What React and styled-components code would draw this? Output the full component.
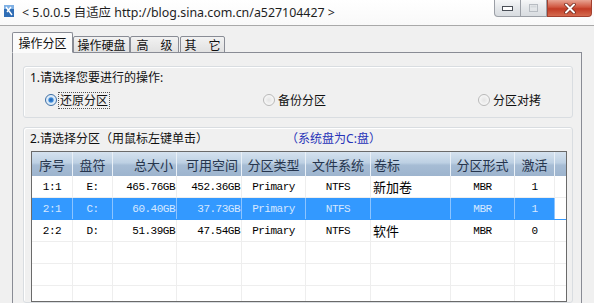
import React from 'react'
import styled, { createGlobalStyle } from 'styled-components'

const UI_FONT = `"Noto Sans", "Noto Sans CJK SC", sans-serif`
const CELL_FONT = `"Liberation Mono", "Noto Sans CJK SC", monospace`

const GlobalStyle = createGlobalStyle`
  html, body {
    margin: 0;
    padding: 0;
    background: #f0f0f0;
    overflow: hidden;
  }
`

const columns = [
  { key: 'id', title: '序号', width: 41, align: 'center', headAlign: 'center' },
  { key: 'drive', title: '盘符', width: 40, align: 'center', headAlign: 'center' },
  { key: 'total', title: '总大小', width: 64, align: 'right', headAlign: 'right' },
  { key: 'free', title: '可用空间', width: 65, align: 'right', headAlign: 'right' },
  { key: 'type', title: '分区类型', width: 64, align: 'center', headAlign: 'center' },
  { key: 'fs', title: '文件系统', width: 65, align: 'center', headAlign: 'center' },
  { key: 'label', title: '卷标', width: 80, align: 'left', headAlign: 'left', cjk: true },
  { key: 'scheme', title: '分区形式', width: 64, align: 'center', headAlign: 'center' },
  { key: 'active', title: '激活', width: 40, align: 'center', headAlign: 'center' }
]

const partitions = [
  { id: '1:1', drive: 'E:', total: '465.76GB', free: '452.36GB', type: 'Primary', fs: 'NTFS', label: '新加卷', scheme: 'MBR', active: '1' },
  { id: '2:1', drive: 'C:', total: '60.40GB', free: '37.73GB', type: 'Primary', fs: 'NTFS', label: '', scheme: 'MBR', active: '1', selected: true },
  { id: '2:2', drive: 'D:', total: '51.39GB', free: '47.54GB', type: 'Primary', fs: 'NTFS', label: '软件', scheme: 'MBR', active: '0' },
  {},
  {},
  {}
]

const gridTemplate = columns.map((c) => `${c.width}px`).join(' ') + ' 1fr'

const Window = styled.div`
  width: 594px;
  height: 303px;
  display: flex;
  flex-direction: column;
  background: #f0f0f0;
  font-family: ${UI_FONT};
  overflow: hidden;
`

const TitleBar = styled.div`
  height: 25px;
  flex-shrink: 0;
  display: flex;
  align-items: flex-start;
  background: linear-gradient(#ffffff, #f9f9f9);
  border-bottom: 1px solid #a9a9a9;
`

const AppIcon = styled.svg`
  margin: 5px 0 0 4px;
  flex-shrink: 0;
`

const Caption = styled.div`
  margin-left: 8px;
  line-height: 25px;
  font-size: 12.4px;
  color: #1e1e1e;
  white-space: nowrap;
`

const Controls = styled.div`
  margin-left: auto;
  margin-right: 2px;
  display: flex;
  height: 17px;
`

const ControlButton = styled.div`
  width: ${(p) => p.$w}px;
  height: 17px;
  box-sizing: border-box;
  display: flex;
  align-items: center;
  justify-content: center;
  border: 1px solid ${(p) => (p.$close ? '#a3402f' : '#9b9fa6')};
  border-top: none;
  border-left-width: ${(p) => (p.$first || p.$close ? 1 : 0)}px;
  border-radius: ${(p) => (p.$first ? '0 0 0 4px' : p.$close ? '0 0 4px 0' : '0')};
  background: ${(p) =>
    p.$close
      ? 'linear-gradient(#e8a493 0%, #d0563f 45%, #c23b25 55%, #d46a4f 100%)'
      : 'linear-gradient(#f6f7f8 0%, #e4e7ea 50%, #d8dce0 100%)'};
`

const Body = styled.div`
  flex: 1;
  display: flex;
  flex-direction: column;
  padding: 6px 12px 0 12px;
  min-height: 0;
`

const TabStrip = styled.div`
  display: flex;
  align-items: flex-end;
  height: 21px;
  flex-shrink: 0;
  position: relative;
  z-index: 1;
  margin-bottom: -1px;
`

const Tab = styled.div`
  box-sizing: border-box;
  height: ${(p) => (p.$active ? 21 : 17)}px;
  width: ${(p) => p.$w}px;
  margin-right: ${(p) => p.$gap || 0}px;
  display: flex;
  align-items: center;
  justify-content: center;
  font-size: 12px;
  color: #111;
  border: 1px solid #898c95;
  border-bottom: ${(p) => (p.$active ? '1px solid #fbfbfb' : '1px solid #898c95')};
  border-radius: 2px 2px 0 0;
  background: ${(p) => (p.$active ? '#fbfbfb' : 'linear-gradient(#f2f2f2, #e1e1e1)')};
  white-space: pre;
`

const Panel = styled.div`
  flex: 1;
  min-height: 0;
  border: 1px solid #898c95;
  border-bottom: none;
  padding: 13px 8px 0 10px;
  display: flex;
  flex-direction: column;
  background: #f0f0f0;
`

const Group = styled.div`
  border: 1px solid #d9dde1;
  border-radius: 3px;
  box-shadow: inset 1px 1px 0 #ffffff;
  padding: 2px 0 ${(p) => p.$pb || 0}px 6px;
  margin-top: ${(p) => p.$mt || 0}px;
  display: flex;
  flex-direction: column;
  flex: ${(p) => (p.$grow ? 1 : '0 0 auto')};
  min-height: 0;
  overflow: hidden;
`

const GroupTitle = styled.div`
  height: 18px;
  line-height: 18px;
  font-size: 12px;
  color: #111;
  display: flex;
  white-space: nowrap;
`

const Hint = styled.span`
  margin-left: 78px;
  color: #2733b8;
`

const RadioRow = styled.div`
  margin-top: 4px;
  height: 18px;
  display: grid;
  grid-template-columns: 218px 215px auto;
  padding-left: 15px;
`

const RadioItem = styled.label`
  display: flex;
  align-items: center;
  gap: 2px;
  font-size: 12px;
  color: #111;
`

const RadioDot = styled.span`
  width: 12px;
  height: 12px;
  border-radius: 50%;
  box-sizing: border-box;
  border: 1px solid ${(p) => (p.$on ? '#3c6ea5' : '#b9b9b9')};
  background: ${(p) =>
    p.$on
      ? 'radial-gradient(circle, #1c5fb0 0%, #3d8ad9 30%, #d9e9f7 45%, #eef4fa 100%)'
      : 'radial-gradient(circle, #e4e4e4 0%, #f7f7f7 70%)'};
`

const RadioText = styled.span`
  outline: ${(p) => (p.$focus ? '1px dotted #555' : 'none')};
  line-height: 15px;
  padding: 0 1px;
`

const Table = styled.div`
  margin: 3px 5px 0 1px;
  border: 1px solid #6a6a6a;
  background: #fff;
  display: flex;
  flex-direction: column;
  flex: 1;
  min-height: 0;
  overflow: hidden;
`

const HeadRow = styled.div`
  display: grid;
  grid-template-columns: ${gridTemplate};
  height: 24px;
  flex-shrink: 0;
  background: linear-gradient(#d5e2ef 0%, #bdd0e3 45%, #a6bcd4 55%, #9db4ce 100%);
`

const HeadCell = styled.div`
  display: flex;
  align-items: center;
  justify-content: ${(p) => (p.$align === 'right' ? 'flex-end' : p.$align === 'left' ? 'flex-start' : 'center')};
  padding: 0 3px;
  font-size: 13px;
  color: #26354d;
  border-right: 1px solid #e9f0f7;
  white-space: nowrap;
  overflow: hidden;
`

const DataRow = styled.div`
  display: grid;
  grid-template-columns: ${gridTemplate};
  height: 21px;
  flex-shrink: 0;
  background: ${(p) => (p.$selected ? '#3399ff' : '#ffffff')};
  color: ${(p) => (p.$selected ? '#d6e8ff' : '#000')};
  border-bottom: 1px solid ${(p) => (p.$selected ? '#3399ff' : '#eeeeee')};
`

const Cell = styled.div`
  display: flex;
  align-items: center;
  justify-content: ${(p) => (p.$align === 'right' ? 'flex-end' : p.$align === 'left' ? 'flex-start' : 'center')};
  padding: ${(p) => (p.$align === 'left' ? '0 2px' : '0 1px')};
  font-family: ${(p) => (p.$cjk ? UI_FONT : CELL_FONT)};
  font-size: ${(p) => (p.$cjk ? 13 : 11)}px;
  letter-spacing: ${(p) => (p.$cjk ? 0 : -0.5)}px;
  border-right: 1px solid ${(p) => (p.$selected ? '#8cc4ff' : '#eeeeee')};
  white-space: nowrap;
  overflow: hidden;
`

const Filler = styled.div`
  background: ${(p) => (p.$selected ? '#ffffff' : 'transparent')};
`

const tabs = [
  { label: '操作分区', w: 61, active: true },
  { label: '操作硬盘', w: 57 },
  { label: '高　级', w: 49, gap: 1 },
  { label: '其　它', w: 45 }
]

const App = () => {
  return (
    <>
      <GlobalStyle />
      <Window>
        <TitleBar>
          <AppIcon width="10" height="12" viewBox="0 0 10 12">
            <rect x="0" y="0" width="10" height="12" fill="#2f6db5" />
            <rect x="0" y="0" width="10" height="4" fill="#7fb0e4" />
            <path d="M2 2 L8 10 M7 2 L3 7" stroke="#ffffff" strokeWidth="1.4" />
          </AppIcon>
          <Caption>&lt; 5.0.0.5 自适应 http://blog.sina.com.cn/a527104427 &gt;</Caption>
          <Controls>
            <ControlButton $w={27} $first>
              <svg width="11" height="5" viewBox="0 0 11 5">
                <rect x="0.5" y="0.5" width="10" height="4" fill="#fff" stroke="#4a4f57" />
              </svg>
            </ControlButton>
            <ControlButton $w={26}>
              <svg width="9" height="8" viewBox="0 0 9 8">
                <rect x="0.5" y="0.5" width="8" height="7" fill="none" stroke="#b7bcc2" />
                <rect x="1.5" y="1.5" width="6" height="2" fill="#d4d8dc" />
              </svg>
            </ControlButton>
            <ControlButton $w={45} $close>
              <svg width="14" height="11" viewBox="0 0 14 11">
                <path d="M3 1.5 L11 9.5 M11 1.5 L3 9.5" stroke="#6b2418" strokeWidth="3.4" strokeLinecap="round" />
                <path d="M3 1.5 L11 9.5 M11 1.5 L3 9.5" stroke="#ffffff" strokeWidth="2" strokeLinecap="round" />
              </svg>
            </ControlButton>
          </Controls>
        </TitleBar>
        <Body>
          <TabStrip>
            {tabs.map((t) => (
              <Tab key={t.label} $active={t.active} $w={t.w} $gap={t.gap}>
                {t.label}
              </Tab>
            ))}
          </TabStrip>
          <Panel>
            <Group $pb={8}>
              <GroupTitle>1.请选择您要进行的操作:</GroupTitle>
              <RadioRow>
                <RadioItem>
                  <RadioDot $on />
                  <RadioText $focus>还原分区</RadioText>
                </RadioItem>
                <RadioItem>
                  <RadioDot />
                  <RadioText>备份分区</RadioText>
                </RadioItem>
                <RadioItem>
                  <RadioDot />
                  <RadioText>分区对拷</RadioText>
                </RadioItem>
              </RadioRow>
            </Group>
            <Group $mt={9} $grow>
              <GroupTitle>
                2.请选择分区（用鼠标左键单击）
                <Hint>（系统盘为C:盘）</Hint>
              </GroupTitle>
              <Table>
                <HeadRow>
                  {columns.map((c) => (
                    <HeadCell key={c.key} $align={c.headAlign}>
                      {c.title}
                    </HeadCell>
                  ))}
                  <div />
                </HeadRow>
                {partitions.map((row, i) => (
                  <DataRow key={i} $selected={row.selected}>
                    {columns.map((c) => (
                      <Cell key={c.key} $align={c.align} $cjk={c.cjk} $selected={row.selected}>
                        {row[c.key] || ''}
                      </Cell>
                    ))}
                    <Filler $selected={row.selected} />
                  </DataRow>
                ))}
              </Table>
            </Group>
          </Panel>
        </Body>
      </Window>
    </>
  )
}

export default App
